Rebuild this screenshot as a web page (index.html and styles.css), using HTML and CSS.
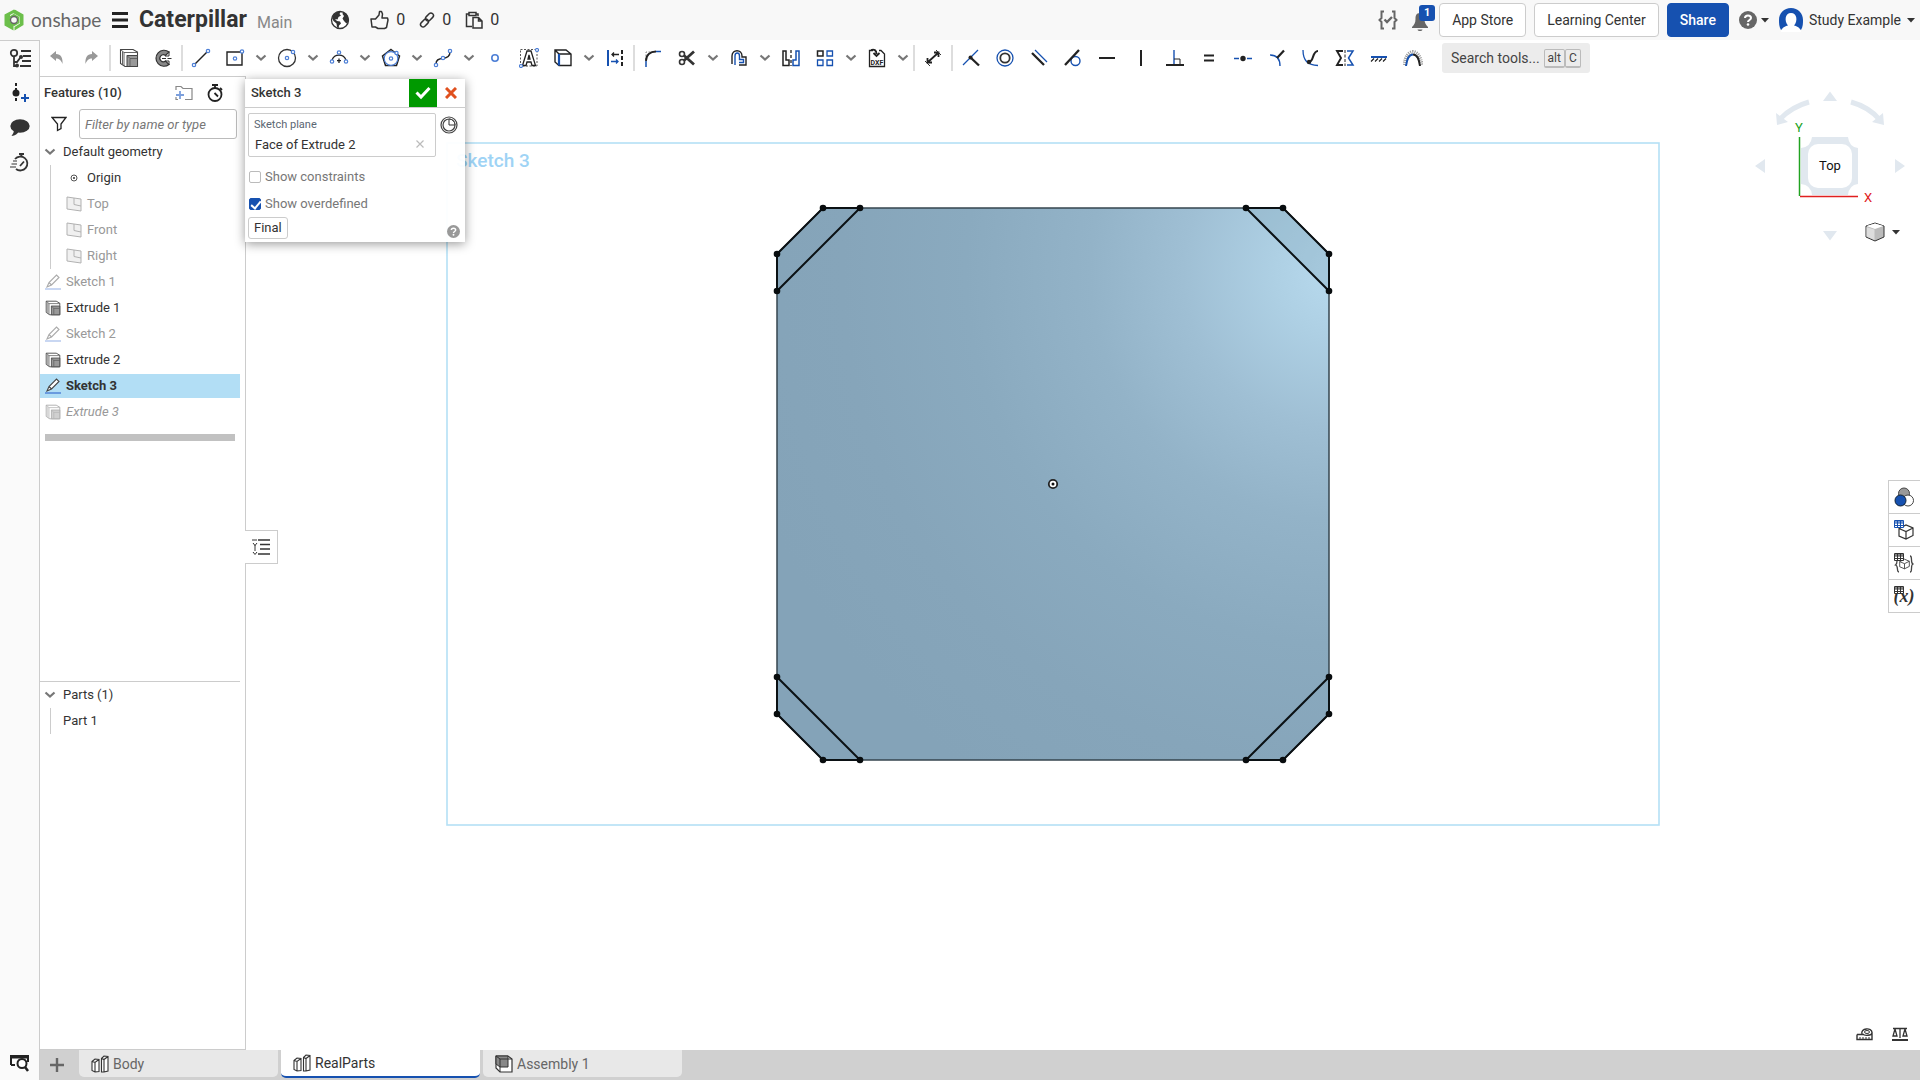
FILE: index.html
```html
<!DOCTYPE html>
<html lang="en">
<head>
<meta charset="utf-8">
<title>Caterpillar | RealParts</title>
<link rel="stylesheet" href="styles.css">
</head>
<body>
<svg class="defs" aria-hidden="true">
  <defs>
    <symbol id="chev" viewBox="0 0 12 8"><path d="M1.500 1.500L6 5.500L10.500 1.500" fill="none" stroke="#777" stroke-width="2.200"/></symbol>
    <symbol id="caret" viewBox="0 0 8 5"><path d="M0 0H8L4 4.500Z" fill="#333"/></symbol>
    <symbol id="extrude" viewBox="0 0 20 20">
      <path d="M1.500 1.500H14L18.500 4V18.500H6L1.500 15.500Z" fill="#fff" stroke="#444" stroke-width="1.100"/>
      <path d="M1.500 1.500L5 4.500H18.500M5 4.500V18M3.500 3.500V16" fill="none" stroke="#555" stroke-width=".9"/>
      <path d="M8 7.500H18.500V18.500H8Z" fill="#999" stroke="#444"/><path d="M8 7.500L11 10.500V18M11 10.500H18" fill="none" stroke="#555" stroke-width=".8"/>
    </symbol>
    <symbol id="pencil" viewBox="0 0 16 16"><path d="M2 13L4 8.500L11.500 1L14 3.500L6.500 11Z M4 8.500L6.500 11" fill="#fff" stroke="#444" stroke-width="1.100"/><path d="M0 15H16" stroke="#3b6fd0" stroke-width="1.200"/></symbol>
    <symbol id="plane" viewBox="0 0 16 16"><path d="M1 1L15 3V15L1 13Z" fill="#e0e0e0" stroke="#555"/><path d="M8 2V8.500L15 10" fill="none" stroke="#555"/></symbol>
    <symbol id="studio" viewBox="0 0 18 18"><path d="M1 6.500L4 4L8 4.500V16.500L4 17L1 15.500ZM1 6.500L4 7.500L8 4.500M4 7.500V17M10.500 3.500L13 1L17 1.500V16L13 17H10.500ZM10.500 3.500L13 4.500L17 1.500M13 4.500V17" fill="#fff" stroke="#333" stroke-width="1.100"/></symbol>
    <symbol id="grid" viewBox="0 0 10 8"><path d="M.5 .5H9.500V7.500H.5ZM.5 3H9.500M.5 5.500H9.500M3.500 .5V7.500M6.500 .5V7.500" fill="#fff" stroke="currentColor"/><path d="M1 1H9V2.500H1Z" fill="currentColor" opacity=".6"/></symbol>
    <symbol id="box" viewBox="0 0 16 16"><path d="M1 4.500L8 1L15 4V11.500L8 15L1 12ZM1 4.500L8 7.500L15 4M8 7.500V15" fill="#fff" stroke="#333" stroke-width="1.200"/></symbol>
  </defs>
</svg>
<div class="app">
  <header class="topbar">
    <a class="brand" href="#">
      <svg width="20" height="22" viewBox="0 0 20 22"><path d="M10 .5L13 2.200L6 6V13L9.500 15V21.500L.5 16.500V5.500Z" fill="#6cbf4b"/><path d="M11 .8L19.500 5.500V16L10.500 21.500V18L16 14.500V8L9 4Z" fill="#6cbf4b"/><path d="M10 6L14.500 8.500V13.500L10 16L5.500 13.500V8.500Z" fill="none" stroke="#6cbf4b" stroke-width="2"/><circle cx="10" cy="11" r="3.500" fill="#f8f8f8" stroke="#666" stroke-width="1.400"/></svg>
      <span>onshape</span>
    </a>
    <button class="plain menu" aria-label="Menu"><svg width="16" height="16" viewBox="0 0 16 16"><path d="M0 1.500H16M0 8H16M0 14.500H16" stroke="#222" stroke-width="2.800"/></svg></button>
    <h1>Caterpillar</h1><span class="branch">Main</span>
    <div class="social">
      <svg class="globe" width="20" height="20" viewBox="0 0 20 20"><circle cx="10" cy="10" r="8.500" fill="#fff" stroke="#333" stroke-width="1.300"/><path d="M2 8L3.500 4.500L8 1.500L10.500 2L9.500 4L11 5.500L8.500 7L7.500 9.500L5 9L7 11L10 11.500L11 13.500L9 15.500L8.500 18.500L7 17L6.500 13.500L3.500 11Z" fill="#333"/><path d="M13 2L16.500 4L18.500 8V12L16.500 13.500L14 11L12.500 8.500L14 6L12.500 4Z" fill="#333"/></svg>
      <button class="plain"><svg width="19" height="20" viewBox="0 0 19 20"><path d="M1 9H5.500L9 5L9.500 1.500H11.500L12.500 4L12 8H17.500L18 10L16.500 17.500L14.500 18.500H8L5.500 17H2Z" fill="none" stroke="#333" stroke-width="1.500" stroke-linejoin="round"/></svg>0</button>
      <button class="plain"><svg width="16" height="16" viewBox="0 0 16 16"><g fill="none" stroke="#333" stroke-width="1.500"><rect x="6" y="2.500" width="9" height="5" rx="2.500" transform="rotate(-45 10.500 5)"/><rect x="1" y="8.500" width="9" height="5" rx="2.500" transform="rotate(-45 5.500 11)"/></g></svg>0</button>
      <button class="plain"><svg width="18" height="18" viewBox="0 0 18 18"><path d="M7 15.500H1.500V3H4M11 3H13V5M4 1.500H11V4.500H4Z" fill="none" stroke="#333" stroke-width="1.500"/><path d="M8 6.500H13.500L17 10V17H8ZM13.500 6.500V10H17" fill="none" stroke="#333" stroke-width="1.500"/></svg>0</button>
    </div>
    <div class="account">
      <button class="plain" aria-label="Checks"><svg width="20" height="20" viewBox="0 0 20 20"><path d="M6 1.500H3.500V8L1.500 10L3.500 12V18.500H6M14 1.500H16.500V8L18.500 10L16.500 12V18.500H14" fill="none" stroke="#666" stroke-width="2"/><path d="M6.500 9.500L9 12L14 7" fill="none" stroke="#666" stroke-width="2.400"/></svg></button>
      <button class="plain bell" aria-label="Notifications"><svg width="18" height="20" viewBox="0 0 18 20"><path d="M9 1C5 1 4.500 4 4.500 7C4.500 11 3 13 1 15V16H17V15C15 13 13.500 11 13.500 7C13.500 4 13 1 9 1ZM6.500 17.500H11.500C11 19.500 7 19.500 6.500 17.500Z" fill="#666"/></svg><span class="badge">1</span></button>
      <button class="btn">App Store</button>
      <button class="btn">Learning Center</button>
      <button class="btn primary">Share</button>
      <button class="plain help" aria-label="Help"><svg width="18" height="18" viewBox="0 0 18 18"><circle cx="9" cy="9" r="9" fill="#666"/><path d="M6 7C6 3.500 12 3.500 12 7C12 9 9 9 9 11" fill="none" stroke="#fff" stroke-width="2"/><circle cx="9" cy="13.500" r="1.300" fill="#fff"/></svg><svg width="8" height="5"><use href="#caret"/></svg></button>
      <button class="plain user"><svg width="24" height="24" viewBox="0 0 24 24"><path d="M2 22C0 19 0 15 0 12C0 5 5 0 12 0S24 5 24 12C24 15 24 19 22 22L16 18H8Z" fill="#1651b0"/><path d="M2 24C3 19 6 18.500 9 17.500C5 13 6 5 12 5S19 13 15 17.500C18 18.500 21 19 22 24Z" fill="#fff"/></svg>Study Example<svg width="8" height="5"><use href="#caret"/></svg></button>
    </div>
  </header>
  <div class="main">
    <nav class="rail">
      <button class="plain" aria-label="Feature list"><svg width="22" height="20" viewBox="0 0 22 20"><g fill="none" stroke="#333" stroke-width="1.800"><circle cx="5" cy="5" r="3.200"/><path d="M5 8V18H8M5 14H8L11 10M12 3H22M14 8H22M13 13H22M11 18H22"/></g><circle cx="12" cy="9" r="2" fill="#333"/><circle cx="8" cy="17.500" r="2" fill="#333"/></svg></button>
      <button class="plain" aria-label="Insert version"><svg width="20" height="20" viewBox="0 0 20 20"><path d="M6 0V20" stroke="#222" stroke-width="2" stroke-dasharray="3 2"/><circle cx="6" cy="10" r="3.500" fill="#222"/><path d="M15 11V19M11 15H19" stroke="#1651b0" stroke-width="2"/></svg></button>
      <button class="plain" aria-label="Comments"><svg width="20" height="18" viewBox="0 0 20 18"><ellipse cx="10" cy="7" rx="9.700" ry="6.700" fill="#333"/><path d="M4 11Q4 14 1.500 17Q7 16.500 9 12Z" fill="#333"/></svg></button>
      <button class="plain" aria-label="History"><svg width="20" height="20" viewBox="0 0 20 20"><g fill="none" stroke="#333" stroke-width="1.800"><path d="M5 6A7 7 0 1 1 6 16M9 1H14M11.500 1V4M10 13L14 8.500"/><path d="M3 8H7M1.500 11H7M0 14H6" stroke-width="1.200"/></g></svg></button>
      <button class="plain last" aria-label="Search tabs"><svg width="20" height="18" viewBox="0 0 20 18"><path d="M1 11V2H18V8M1 11H5" fill="none" stroke="#222" stroke-width="2"/><path d="M1 2H18V4H1Z" fill="#222" stroke="#222"/><circle cx="12" cy="9.500" r="4.500" fill="#fff" stroke="#222" stroke-width="2"/><path d="M15 13L18 17" stroke="#222" stroke-width="2.500"/></svg></button>
    </nav>
    <div class="work">
      <div class="toolbar">
        <button class="tool" aria-label="Undo"><svg viewBox="0 0 20 20"><path d="M3 8L9 3V6C14 6 16 10 15.500 16C14 12 12 10.500 9 10.500V13Z" fill="#999"/></svg></button>
        <button class="tool" aria-label="Redo"><svg viewBox="0 0 20 20"><path d="M17 8L11 3V6C6 6 4 10 4.500 16C6 12 8 10.500 11 10.500V13Z" fill="#999"/></svg></button>
        <i class="sep"></i>
        <button class="tool" aria-label="Extrude"><svg><use href="#extrude"/></svg></button>
        <button class="tool" aria-label="Revolve"><svg viewBox="0 0 20 20"><path d="M16 4A8 8 0 1 0 16 16.500L12.500 13A3.500 3.500 0 1 1 12.500 7.500Z" fill="#888" stroke="#333" stroke-width="1.200"/><path d="M9 10.500H20" stroke="#333" stroke-dasharray="4 1.500"/><path d="M16 3.500V8H12M16 17V13H12" fill="none" stroke="#333"/></svg></button>
        <i class="sep"></i>
        <button class="tool" aria-label="Line"><svg viewBox="0 0 20 20"><path d="M3.500 16.500L16.500 3.500" stroke="#222" stroke-width="1.400"/><g class="pt"><circle cx="3" cy="17" r="1.700"/><circle cx="17" cy="3" r="1.700"/></g></svg></button>
        <button class="tool" aria-label="Rectangle"><svg viewBox="0 0 20 20"><path d="M2 4H17V17H2Z" fill="none" stroke="#222" stroke-width="1.400"/><g class="pt"><circle cx="17" cy="3.500" r="1.700"/><circle cx="10" cy="10.500" r="1.700"/></g></svg></button>
        <button class="drop" aria-label="More rectangles"><svg><use href="#chev"/></svg></button>
        <button class="tool" aria-label="Circle"><svg viewBox="0 0 20 20"><circle cx="10" cy="10" r="8.500" fill="none" stroke="#333" stroke-width="1.300"/><g class="pt"><circle cx="16" cy="4" r="1.700"/><circle cx="10" cy="10" r="1.700"/></g></svg></button>
        <button class="drop" aria-label="More circles"><svg><use href="#chev"/></svg></button>
        <button class="tool" aria-label="Arc"><svg viewBox="0 0 20 20"><path d="M3 12A7.500 7.500 0 0 1 17 12M10 10.500V15M8 12.700H12" fill="none" stroke="#222" stroke-width="1.300"/><g class="pt"><circle cx="3" cy="13.500" r="1.700"/><circle cx="10" cy="4.500" r="1.700"/><circle cx="17" cy="13.500" r="1.700"/></g></svg></button>
        <button class="drop" aria-label="More arcs"><svg><use href="#chev"/></svg></button>
        <button class="tool" aria-label="Polygon"><svg viewBox="0 0 20 20"><path d="M10 1.500L18.500 8L15.500 17.500H4.500L1.500 8Z" fill="none" stroke="#222" stroke-width="1.500"/><g class="pt"><circle cx="10" cy="10.500" r="6.800"/><circle cx="15.500" cy="5" r="1.600"/><circle cx="10" cy="10.500" r="1.700"/></g></svg></button>
        <button class="drop" aria-label="More polygons"><svg><use href="#chev"/></svg></button>
        <button class="tool" aria-label="Spline"><svg viewBox="0 0 20 20"><path d="M3 16Q3 10.500 10 10.500Q17 9.500 17 4" fill="none" stroke="#222" stroke-width="1.400"/><g class="pt"><circle cx="3" cy="17" r="1.700"/><circle cx="10" cy="10" r="1.700"/><circle cx="17" cy="3" r="1.700"/></g></svg></button>
        <button class="drop" aria-label="More splines"><svg><use href="#chev"/></svg></button>
        <button class="tool" aria-label="Point"><svg viewBox="0 0 20 20"><circle cx="10" cy="10" r="3.200" fill="#fff" stroke="#4d7fd6" stroke-width="1.600"/></svg></button>
        <button class="tool" aria-label="Text"><svg viewBox="0 0 20 20"><path d="M1.500 1.500H18V18H1.500Z" fill="none" stroke="#555" stroke-dasharray="2 1.500"/><path d="M3.500 17.500L8 3H12L16.500 17.500H13L12 14H8L7 17.500ZM9 11H11L10 7Z" fill="#fff" stroke="#222" stroke-width="1.300"/><g class="pt"><circle cx="18" cy="2" r="1.500"/><circle cx="2" cy="18" r="1.500"/></g></svg></button>
        <button class="tool" aria-label="Use"><svg viewBox="0 0 20 20"><path d="M2 2H13L18 6V17.500H6L2 14ZM2 2L6 6H18" fill="none" stroke="#222" stroke-width="1.400"/><path d="M6 6V17.500" stroke="#1651b0" stroke-width="2.200"/></svg></button>
        <button class="drop" aria-label="More use tools"><svg><use href="#chev"/></svg></button>
        <button class="tool" aria-label="Offset distance"><svg viewBox="0 0 20 20"><path d="M3 2V18" stroke="#1651b0" stroke-width="2"/><path d="M17 2V18" stroke="#222" stroke-width="2" stroke-dasharray="4 2"/><path d="M14 6.500H7M9 4.500L7 6.500L9 8.500" fill="none" stroke="#222" stroke-width="1.300"/><path d="M6 13.500H13M11 11.500L13 13.500L11 15.500" fill="none" stroke="#1651b0" stroke-width="1.300"/></svg></button>
        <i class="sep"></i>
        <button class="tool" aria-label="Fillet"><svg viewBox="0 0 20 20"><path d="M3 12V4H10" fill="none" stroke="#888" stroke-dasharray="2 1.500"/><path d="M3 13C3 7 7 3.500 13 3.500" fill="none" stroke="#222" stroke-width="1.800"/><path d="M3 13V19M13 3.500H18" stroke="#1651b0" stroke-width="1.500"/></svg></button>
        <button class="tool" aria-label="Trim"><svg viewBox="0 0 20 20"><g fill="none" stroke="#333" stroke-width="1.600"><circle cx="5" cy="6" r="2.500"/><circle cx="5" cy="14" r="2.500"/></g><path d="M7 12.500L17 3.500M7 7.500L17 16.500" stroke="#333" stroke-width="2.800"/></svg></button>
        <button class="drop" aria-label="More trim tools"><svg><use href="#chev"/></svg></button>
        <button class="tool" aria-label="Offset"><svg viewBox="0 0 20 20"><path d="M3 16V8C3 1 13 1 13 8V9H17V17H10" fill="none" stroke="#222" stroke-width="1.400"/><path d="M6 17V8C6 4 10.500 4 10.500 8V11.500H14.500V14.500H10" fill="none" stroke="#1651b0" stroke-width="1.400"/></svg></button>
        <button class="drop" aria-label="More offset tools"><svg><use href="#chev"/></svg></button>
        <button class="tool" aria-label="Mirror"><svg viewBox="0 0 20 20"><path d="M2 3H5V12H8V17.500H2Z" fill="none" stroke="#222" stroke-width="1.500"/><path d="M10 2V18" stroke="#222" stroke-width="1.300" stroke-dasharray="3 2"/><path d="M18 3H15V12H12V17.500H18Z" fill="none" stroke="#1651b0" stroke-width="1.500"/></svg></button>
        <button class="tool" aria-label="Pattern"><svg viewBox="0 0 20 20"><path d="M2.500 3H8V8H2.500Z" fill="none" stroke="#222" stroke-width="1.500"/><path d="M12 3H17.500V8H12ZM2.500 12H8V17.500H2.500ZM12 12H17.500V17.500H12Z" fill="none" stroke="#1651b0" stroke-width="1.300"/></svg></button>
        <button class="drop" aria-label="More patterns"><svg><use href="#chev"/></svg></button>
        <button class="tool" aria-label="Insert DXF"><svg viewBox="0 0 20 20"><path d="M6 2.500H2.500V18.500H17.500V6L14 2.500H12" fill="none" stroke="#222" stroke-width="1.300"/><path d="M4 2C7 1 9.500 2 9.500 6M6.500 5L9.500 8L12.500 5" fill="none" stroke="#222" stroke-width="1.800"/><text x="10" y="17" font-size="7" font-weight="700" text-anchor="middle" fill="#222">DXF</text></svg></button>
        <button class="drop" aria-label="More insert tools"><svg><use href="#chev"/></svg></button>
        <i class="sep"></i>
        <button class="tool" aria-label="Dimension"><svg viewBox="0 0 20 20"><path d="M5 14L15 5M4.500 10V14.500H9M11 4.500H15.500V9" fill="none" stroke="#222" stroke-width="1.800"/><path d="M2 13L7 18M13 2L18 7" stroke="#333"/></svg></button>
        <i class="sep"></i>
        <button class="tool" aria-label="Coincident"><svg viewBox="0 0 20 20"><path d="M2 17L17 2" stroke="#1651b0" stroke-width="1.300"/><path d="M9.500 9.500L18 17.500" stroke="#222" stroke-width="2.400"/><circle cx="9.500" cy="9.500" r="2" fill="#222"/></svg></button>
        <button class="tool" aria-label="Concentric"><svg viewBox="0 0 20 20"><circle cx="10" cy="10" r="8" fill="none" stroke="#1651b0" stroke-width="1.300"/><circle cx="10" cy="10" r="4.700" fill="none" stroke="#333" stroke-width="1.800"/></svg></button>
        <button class="tool" aria-label="Parallel"><svg viewBox="0 0 20 20"><path d="M3 5L15 17" stroke="#222" stroke-width="2.300"/><path d="M6 2L18 14" stroke="#1651b0" stroke-width="1.200"/></svg></button>
        <button class="tool" aria-label="Tangent"><svg viewBox="0 0 20 20"><circle cx="12.500" cy="13" r="4.500" fill="none" stroke="#1651b0" stroke-width="1.400"/><path d="M2 17L16 2" stroke="#222" stroke-width="2.300"/></svg></button>
        <button class="tool" aria-label="Horizontal"><svg viewBox="0 0 20 20"><path d="M2 10H18" stroke="#222" stroke-width="2"/></svg></button>
        <button class="tool" aria-label="Vertical"><svg viewBox="0 0 20 20"><path d="M10 2V18" stroke="#222" stroke-width="2"/></svg></button>
        <button class="tool" aria-label="Perpendicular"><svg viewBox="0 0 20 20"><path d="M9 2V17" stroke="#1651b0" stroke-width="1.400"/><path d="M1 17H19" stroke="#222" stroke-width="2"/><path d="M9 11H15V16" fill="none" stroke="#222"/></svg></button>
        <button class="tool" aria-label="Equal"><svg viewBox="0 0 20 20"><path d="M5 7.500H15M5 12.500H15" stroke="#222" stroke-width="2"/></svg></button>
        <button class="tool" aria-label="Midpoint"><svg viewBox="0 0 20 20"><path d="M1 10.500H6M14 10.500H19" stroke="#1651b0" stroke-width="1.300"/><circle cx="10" cy="10.500" r="2.700" fill="#222"/></svg></button>
        <button class="tool" aria-label="Normal"><svg viewBox="0 0 20 20"><path d="M3 7C10 7 13 11 13 18" fill="none" stroke="#1651b0" stroke-width="1.400"/><path d="M10 10L17 2.500" stroke="#222" stroke-width="2.200"/></svg></button>
        <button class="tool" aria-label="Pierce"><svg viewBox="0 0 20 20"><path d="M2 2C2 13 7 17 17 17.500" fill="none" stroke="#1651b0" stroke-width="1.300"/><path d="M8 14C13 14 11 3 17 3" fill="none" stroke="#222" stroke-width="2"/><circle cx="8" cy="14" r="2.200" fill="#222"/></svg></button>
        <button class="tool" aria-label="Symmetric"><svg viewBox="0 0 20 20"><path d="M8 3H2L6 10L2 17H8" fill="none" stroke="#222" stroke-width="1.900"/><path d="M10 2V18" stroke="#222" stroke-dasharray="3 1.500"/><path d="M12 3H18L13.500 10L18 17H12" fill="none" stroke="#1651b0" stroke-width="1.500"/></svg></button>
        <button class="tool" aria-label="Fix"><svg viewBox="0 0 20 20"><path d="M2 9H18" stroke="#1651b0" stroke-width="2"/><path d="M2 13.500L5 10.500M6 13.500L9 10.500M10 13.500L13 10.500M14 13.500L17 10.500" stroke="#222" stroke-width="1.200"/></svg></button>
        <button class="tool" aria-label="Curvature"><svg viewBox="0 0 20 20"><path d="M1.500 17C2.500 9 5.500 4.500 10 4C14.500 4.500 17.500 9 18.500 17" fill="none" stroke="#999" stroke-width="4" stroke-dasharray="1 1"/><path d="M3 18C4 10 7 6.500 10 6.500" fill="none" stroke="#1651b0" stroke-width="2"/><path d="M10 6.500C13 6.500 16 10 17 18" fill="none" stroke="#222" stroke-width="2"/></svg></button>
        <button class="search">Search tools...<kbd>alt</kbd><kbd>C</kbd></button>
      </div>
      <div class="content">
        <aside class="side">
          <section class="features">
            <div class="side-head"><h2>Features (10)</h2>
              <button class="plain" aria-label="Add folder"><svg width="18" height="16" viewBox="0 0 18 16"><path d="M1 5V1.500H6L8 3.500H17V14.500H10M1 12V14.500H3" fill="none" stroke="#888" stroke-width="1.200"/><path d="M5 6V14M1 10H9" stroke="#7c9fdc" stroke-width="1.800"/></svg></button>
              <button class="plain" aria-label="Regeneration times"><svg width="18" height="18" viewBox="0 0 18 18"><g fill="none" stroke="#222" stroke-width="1.800"><circle cx="9" cy="10.500" r="6.500"/><path d="M6 1H12M9 1V4M8.500 9L12 12.500M14 4L16 6"/></g></svg></button>
            </div>
            <div class="filter"><svg width="16" height="16" viewBox="0 0 16 16"><path d="M1 1.500H15L10 8V12.500L6.500 14.500V8Z" fill="none" stroke="#222" stroke-width="1.300"/></svg><input type="text" aria-label="Filter" placeholder="Filter by name or type"></div>
            <ul class="tree">
              <li class="row group"><svg width="12" height="8"><use href="#chev"/></svg>Default geometry</li>
              <li><ul class="children">
                <li class="row origin"><svg width="16" height="16" viewBox="0 0 16 16"><circle cx="8" cy="8" r="3" fill="none" stroke="#555"/><circle cx="8" cy="8" r="1" fill="#333"/></svg>Origin</li>
                <li class="row dim"><svg width="16" height="16"><use href="#plane"/></svg>Top</li>
                <li class="row dim"><svg width="16" height="16"><use href="#plane"/></svg>Front</li>
                <li class="row dim"><svg width="16" height="16"><use href="#plane"/></svg>Right</li>
              </ul></li>
              <li class="row dim"><svg width="16" height="16"><use href="#pencil"/></svg>Sketch 1</li>
              <li class="row"><svg width="16" height="16"><use href="#extrude"/></svg>Extrude 1</li>
              <li class="row dim"><svg width="16" height="16"><use href="#pencil"/></svg>Sketch 2</li>
              <li class="row"><svg width="16" height="16"><use href="#extrude"/></svg>Extrude 2</li>
              <li class="row selected"><svg width="16" height="16"><use href="#pencil"/></svg>Sketch 3</li>
              <li class="row dim future"><svg width="16" height="16"><use href="#extrude"/></svg>Extrude 3</li>
            </ul>
            <div class="rollback"></div>
          </section>
          <section class="parts">
            <ul class="tree">
              <li class="row group"><svg width="12" height="8"><use href="#chev"/></svg>Parts (1)</li>
              <li><ul class="children part"><li class="row">Part 1</li></ul></li>
            </ul>
          </section>
        </aside>
        <main class="canvas">
          <svg class="model" viewBox="246 76 1674 974">
            <defs><radialGradient id="shine" gradientUnits="userSpaceOnUse" cx="1338" cy="272" r="620">
              <stop offset="0" stop-color="#b8daee"/><stop offset=".1" stop-color="#aed0e4"/><stop offset=".25" stop-color="#9fbfd4"/><stop offset=".4" stop-color="#93b3c8"/><stop offset=".6" stop-color="#8aaabf"/><stop offset=".8" stop-color="#86a5ba"/><stop offset="1" stop-color="#84a3b8"/></radialGradient></defs>
            <rect x="447" y="143" width="1212" height="682" fill="none" stroke="#b5e0f6" stroke-width="1.600"/>
            <text x="456" y="167" class="sketch-name">Sketch 3</text>
            <path d="M823 208H1283L1329 254V714L1283 760H823L777 714V254Z" fill="url(#shine)" stroke="#36454f" stroke-width="1.500"/>
            <path d="M1246 208H1283L1329 254V291Z" fill="#85a8bd" fill-opacity=".35"/>
            <path d="M777 291L860 208H823L777 254ZM1246 208H1283L1329 254V291ZM777 677V714L823 760H860ZM1329 677V714L1283 760H1246Z" fill="none" stroke="#0b1114" stroke-width="2"/>
            <g fill="#080c0e"><circle cx="823" cy="208" r="3.300"/><circle cx="860" cy="208" r="3.300"/><circle cx="777" cy="254" r="3.300"/><circle cx="777" cy="291" r="3.300"/><circle cx="1246" cy="208" r="3.300"/><circle cx="1283" cy="208" r="3.300"/><circle cx="1329" cy="254" r="3.300"/><circle cx="1329" cy="291" r="3.300"/><circle cx="777" cy="677" r="3.300"/><circle cx="777" cy="714" r="3.300"/><circle cx="823" cy="760" r="3.300"/><circle cx="860" cy="760" r="3.300"/><circle cx="1246" cy="760" r="3.300"/><circle cx="1283" cy="760" r="3.300"/><circle cx="1329" cy="677" r="3.300"/><circle cx="1329" cy="714" r="3.300"/></g>
            <circle cx="1053" cy="484" r="4.200" fill="#fff" stroke="#222" stroke-width="1.800"/><circle cx="1053" cy="484" r="1.500" fill="#111"/>
          </svg>

          <form class="dialog">
            <div class="dialog-head"><h3>Sketch 3</h3>
              <button type="button" class="accept" aria-label="Accept"><svg width="16" height="14" viewBox="0 0 16 14"><path d="M1.500 6.500L6 11L14.500 2" fill="none" stroke="#fff" stroke-width="3"/></svg></button>
              <button type="button" class="cancel" aria-label="Cancel"><svg width="12" height="12" viewBox="0 0 12 12"><path d="M1 1L11 11M11 1L1 11" stroke="#e0501e" stroke-width="3"/></svg></button>
            </div>
            <div class="dialog-body">
              <div class="plane-row">
                <div class="plane-box"><label for="plane-in">Sketch plane</label><div class="plane-value"><input id="plane-in" type="text" value="Face of Extrude 2"><button type="button" class="plain" aria-label="Clear"><svg width="8" height="8" viewBox="0 0 8 8"><path d="M.5 .5L7.500 7.500M7.500 .5L.5 7.500" stroke="#bbb" stroke-width="1.200"/></svg></button></div></div>
                <button type="button" class="plain" aria-label="Timer"><svg width="18" height="18" viewBox="0 0 18 18"><g fill="none" stroke="#444" stroke-width="1.200"><circle cx="9" cy="9" r="8"/><circle cx="9" cy="9" r="6"/></g><path d="M9 3V9H15A6 6 0 0 0 9 3Z" fill="#fff" stroke="#333"/></svg></button>
              </div>
              <label class="check"><input type="checkbox">Show constraints</label>
              <label class="check"><input type="checkbox" checked>Show overdefined</label>
              <div class="dialog-foot"><button type="button" class="final">Final</button>
                <button type="button" class="plain" aria-label="Dialog help"><svg width="13" height="13" viewBox="0 0 18 18"><circle cx="9" cy="9" r="9" fill="#999"/><path d="M6 7C6 3.500 12 3.500 12 7C12 9 9 9 9 11" fill="none" stroke="#fff" stroke-width="2"/><circle cx="9" cy="13.500" r="1.300" fill="#fff"/></svg></button></div>
            </div>
          </form>

          <button class="list-toggle" aria-label="Toggle list"><svg width="18" height="18" viewBox="0 0 18 18"><path d="M6 2H18M8 6.500H18M8 11H18M6 16H18" stroke="#333" stroke-width="1.500"/><path d="M0 2H5M1 5L3 7.500L5 5M3 7V13M1 14L3 16.500L5 14" fill="none" stroke="#333"/></svg></button>

          <div class="viewcube">
            <svg width="160" height="150" viewBox="1750 88 160 150">
              <g fill="#e1e8ef"><path d="M1823 101H1837L1830 91.500ZM1823 231H1837L1830 240.500ZM1765 159V173L1755 166ZM1895 159V173L1905 166Z"/>
              <path d="M1812 137H1848Q1849 147 1858 148V184Q1849 185 1848 195H1812Q1811 185 1801 184V148Q1811 147 1812 137Z"/><path d="M1777 125L1776 113L1788 122ZM1884 125L1883 113L1872 122Z"/></g>
              <path d="M1809 102Q1791 107 1779 120M1851 102Q1869 107 1880 120" fill="none" stroke="#e1e8ef" stroke-width="5"/>
              <rect x="1808" y="144" width="44" height="44" rx="10" fill="#fff"/>
              <path d="M1799.500 137V196" stroke="#21a321" stroke-width="1.500"/><path d="M1800 196.500H1858" stroke="#e02020" stroke-width="1.500"/>
              <text x="1799" y="132" fill="#21a321">Y</text><text x="1868" y="202" fill="#e02020">X</text>
              <text x="1830" y="170" fill="#111">Top</text>
            </svg>
            <button class="plain shade" aria-label="View options"><svg width="20" height="20" viewBox="0 0 20 20"><path d="M1 4L10 1L19 4V15L10 19L1 15Z" fill="#bbb" stroke="#333"/><path d="M1.500 4L10 7L18.500 4L10 1.500Z" fill="#fff"/><path d="M1.500 5L9.500 7.500V18L1.500 14.500Z" fill="#ddd"/></svg><svg width="8" height="5"><use href="#caret"/></svg></button>
          </div>

          <div class="panels">
            <button aria-label="Appearance"><svg width="20" height="20" viewBox="0 0 20 20"><circle cx="10" cy="6.500" r="5.500" fill="#999" stroke="#444"/><circle cx="14" cy="13.500" r="5.500" fill="#fff" stroke="#444"/><circle cx="6.500" cy="13.500" r="5.500" fill="#1651b0" stroke="#123"/></svg></button>
            <button class="blue" aria-label="Configurations"><svg width="20" height="20" viewBox="0 0 20 20"><use href="#box" x="4" y="4" width="16" height="16"/><use href="#grid" width="10" height="8"/></svg></button>
            <button aria-label="Custom tables"><svg width="20" height="20" viewBox="0 0 20 20"><use href="#box" x="5" y="5" width="11" height="12"/><path d="M5 19C2 19 5 13 1.500 12C3 11 3 10 3 8M16 3C19 3 16 10 19 11C16 12 19 19 16 19" fill="none" stroke="#444" stroke-width="1.300"/><use href="#grid" width="10" height="8"/></svg></button>
            <button aria-label="Variables"><svg width="20" height="20" viewBox="0 0 20 20"><text x="10" y="16" text-anchor="middle" class="var">(x)</text><use href="#grid" width="10" height="8"/></svg></button>
          </div>

          <div class="measure">
            <svg width="18" height="14" viewBox="0 0 18 14"><path d="M1 7.500H8M1 7.500V12.500H16V5M6 7C4 1 16 0 16 5.500C16 9 8 9 7 7" fill="none" stroke="#333" stroke-width="1.400"/><ellipse cx="11" cy="5" rx="2.500" ry="1.500" fill="none" stroke="#333"/><path d="M4 12V10M7 12V10M10 12V10M13 12V10" stroke="#333"/></svg>
            <svg width="16" height="15" viewBox="0 0 16 15"><path d="M1 1.500H15M8 1.500V11M3 2L1 9H5L3 2M13 2L11 9H15L13 2" fill="none" stroke="#333" stroke-width="1.300"/><path d="M0 13H16" stroke="#333" stroke-width="2"/></svg>
          </div>
        </main>
      </div>
      <footer class="tabs">
        <button class="plain add" aria-label="Add tab"><svg width="14" height="14" viewBox="0 0 14 14"><path d="M7 0V14M0 7H14" stroke="#666" stroke-width="2.400"/></svg></button>
        <a class="tab" href="#"><svg width="18" height="18"><use href="#studio"/></svg>Body</a>
        <a class="tab active" href="#"><svg width="18" height="18"><use href="#studio"/></svg>RealParts</a>
        <a class="tab" href="#"><svg width="18" height="18" viewBox="0 0 18 18"><path d="M1 1H13L17 4V17H5L1 13Z" fill="#fff" stroke="#333" stroke-width="1.200"/><path d="M1 1H13V12H5L1 9Z" fill="#888" stroke="#333"/><path d="M1 1L5 4H17M5 4V17" fill="none" stroke="#333"/></svg>Assembly 1</a>
      </footer>
    </div>
  </div>
</div>
</body>
</html>
```
FILE: styles.css
```css
* { box-sizing: border-box; }
body { margin: 0; font: 13px/20px Roboto, "Liberation Sans", sans-serif; color: #333; background: #fff; }
button, input { font: inherit; color: inherit; }
button { cursor: pointer; }
h1, h2, h3, ul { margin: 0; padding: 0; list-style: none; }
svg { display: block; flex: none; }
.defs { position: absolute; width: 0; height: 0; }
.plain { border: 0; background: none; padding: 0; display: flex; align-items: center; justify-content: center; }
.app { height: 100vh; display: flex; flex-direction: column; }

.topbar { height: 40px; flex: none; display: flex; align-items: center; background: #f8f8f8; padding: 0 5px 0 4px; }
.brand { display: flex; align-items: center; gap: 7px; width: 108px; color: #666; text-decoration: none; font: 19px/24px Lato, sans-serif; }
.menu { margin-right: 11px; }
.topbar h1 { font-size: 23px; font-weight: 700; line-height: 24px; }
.branch { color: #888; font-size: 16px; margin: 6px 0 0 10px; }
.social { display: flex; align-items: center; gap: 14px; margin-left: 38px; font-size: 16px; }
.social .plain { gap: 7px; }
.globe { margin-right: 6px; }
.account { display: flex; align-items: center; margin-left: auto; font-size: 14px; }
.bell { position: relative; margin: 4px 10px 0 13px; }
.badge { position: absolute; left: 8px; top: -7px; width: 16px; height: 16px; border-radius: 3px; background: #1651b0; color: #fff; font-size: 11px; line-height: 16px; font-weight: 700; }
.btn { height: 34px; padding: 0 12px; margin-right: 8px; border: 1px solid #ccc; border-radius: 4px; background: #fff; white-space: nowrap; }
.btn.primary { background: #1651b0; border-color: #1651b0; color: #fff; font-weight: 500; margin-right: 10px; }
.help { gap: 4px; margin-right: 10px; }
.user { gap: 6px; }

.main { flex: 1; min-height: 0; display: flex; }
.rail { width: 40px; flex: none; display: flex; flex-direction: column; align-items: center; background: #fafafa; border: 1px solid #ccc; border-width: 1px 1px 0 0; padding: 7px 0; }
.rail .plain { width: 22px; height: 20px; margin-bottom: 15px; }
.rail .last { margin: auto 0 0; }
.work { flex: 1; min-width: 0; display: flex; flex-direction: column; }

.toolbar { height: 36px; flex: none; display: flex; align-items: center; }
.tool { width: 34px; height: 34px; flex: none; padding: 0; border: 0; background: none; display: flex; align-items: center; justify-content: center; }
.tool svg { width: 20px; height: 20px; }
.drop { width: 18px; height: 34px; flex: none; padding: 0; border: 0; background: none; display: flex; align-items: center; justify-content: center; }
.drop svg { width: 12px; height: 8px; }
.pt { fill: #fff; stroke: #4d7fd6; stroke-width: 1.2px; }
.sep { width: 2px; height: 26px; margin: 0 1px; background: #ddd; flex: none; }
.search { height: 30px; margin-left: 12px; padding: 0 9px; border: 0; border-radius: 3px; background: #ececec; font-size: 14px; color: #444; display: flex; align-items: center; white-space: nowrap; }
.search kbd { font: 12px/16px Roboto, sans-serif; height: 19px; padding: 0 3px; border: 1px solid #bbb; border-bottom-width: 2px; border-radius: 2px; }
.search kbd:first-of-type { margin-left: 4px; }

.content { flex: 1; min-height: 0; display: flex; }
.side { width: 206px; flex: none; display: flex; flex-direction: column; border: 1px solid #ccc; border-left: 0; }
.features { flex: 1; }
.side-head { display: flex; align-items: center; gap: 13px; height: 32px; padding: 0 21px 0 4px; }
.side-head h2 { font-size: 13px; font-weight: 500; margin-right: auto; }
.filter { display: flex; align-items: center; gap: 12px; padding: 0 8px 0 11px; }
.filter input { flex: 1; min-width: 0; height: 30px; padding: 0 5px; border: 1px solid #bbb; border-radius: 3px; font-style: italic; outline: 0; }
.filter input::placeholder { color: #777; }
.row { height: 26px; display: flex; align-items: center; gap: 5px; padding: 0 5px; margin-right: 5px; border: 1px solid transparent; border-width: 1px 0; background-clip: padding-box; }
.group { gap: 7px; }
.group svg { margin-left: -1px; }
.children { margin-left: 10px; border-left: 1px solid #ccc; padding-left: 10px; }
.part { padding-left: 7px; }
.dim { color: #999; }
.dim svg { opacity: .45; }
.future { font-style: italic; }
.selected { background-color: #b2def5; font-weight: 700; }
.rollback { height: 7px; margin: 9px 10px 0 5px; background: #c1c1c1; }
.parts { height: 368px; }
.parts .tree { border-top: 1px solid #ccc; margin-right: 5px; }

.canvas { flex: 1; min-width: 0; position: relative; }
.model { width: 100%; height: 100%; }
.sketch-name { font-size: 19px; font-weight: 500; fill: #9ed3f5; }

.dialog { position: absolute; left: -1px; top: 3px; width: 220px; background: #fffffff2; box-shadow: 0 2px 10px #0006; }
.dialog-head { display: flex; align-items: center; height: 29px; padding-left: 6px; border-bottom: 1px solid #ccc; }
.dialog-head h3 { flex: 1; font-size: 13px; font-weight: 500; }
.accept, .cancel { width: 28px; height: 28px; border: 0; padding: 0; display: flex; align-items: center; justify-content: center; background: #090; }
.cancel { background: none; }
.dialog-body { padding: 5px 3px 3px; }
.plane-row { display: flex; align-items: flex-start; gap: 4px; margin-bottom: 6px; }
.plane-row > .plain { margin-top: 3px; }
.plane-box { width: 188px; height: 44px; padding: 2px 5px; border: 1px solid #ccc; border-radius: 2px; font-size: 11px; line-height: 18px; }
.plane-box label { display: block; color: #5a6672; }
.plane-value { display: flex; font-size: 13px; padding-right: 6px; }
.plane-value input { flex: 1; min-width: 0; border: 0; padding: 0 1px; height: 20px; background: none; outline: 0; }
.check { display: flex; align-items: center; gap: 4px; height: 27px; padding-left: 1px; color: #777; }
.check input { appearance: none; width: 12px; height: 12px; margin: 0; border: 1px solid #bbb; border-radius: 2px; background: #fff; position: relative; }
.check input:checked { background: #1651b0; border-color: #1651b0; }
.check input:checked::after { content: ""; position: absolute; left: 3px; top: 0; width: 4px; height: 8px; border: solid #fff; border-width: 0 2px 2px 0; transform: rotate(40deg); }
.dialog-foot { display: flex; justify-content: space-between; align-items: center; padding-right: 2px; }
.dialog-foot .plain { margin-top: 6px; }
.final { height: 22px; padding: 0 5px; border: 1px solid #ccc; border-radius: 3px; background: #fff; line-height: 18px; }

.list-toggle { position: absolute; left: -1px; top: 454px; width: 33px; height: 34px; padding: 0 0 0 7px; border: 1px solid #ccc; border-left: 0; background: #fff; }
.viewcube { position: absolute; right: 10px; top: 12px; }
.viewcube svg { overflow: visible; }
.viewcube text { font-size: 13px; text-anchor: middle; }
.shade { position: absolute; left: 115px; top: 134px; gap: 7px; }
.panels { position: absolute; right: 0; top: 404px; display: flex; flex-direction: column; border: 1px solid #ccc; border-width: 1px 0 0 1px; background: #fff; }
.panels button { width: 31px; height: 33px; padding: 0 0 0 5px; border: 0; border-bottom: 1px solid #ccc; background: none; color: #333; }
.panels .blue { color: #1651b0; }
.var { font: italic 700 18px "Liberation Serif", serif; fill: #333; }
.measure { position: absolute; right: 12px; bottom: 8px; display: flex; gap: 18px; }

.tabs { height: 30px; flex: none; display: flex; gap: 3px; background: #d0d0d0; }
.add { width: 36px; height: 30px; padding-right: 3px; }
.tab { width: 199px; height: 27px; display: flex; align-items: center; gap: 4px; padding-left: 12px; background: #e8e8e8; border-radius: 0 0 5px 5px; color: #666; text-decoration: none; font-size: 14px; }
.tab.active { background: #fff; color: #333; height: 28px; border-bottom: 2px solid #1651b0; }
```
